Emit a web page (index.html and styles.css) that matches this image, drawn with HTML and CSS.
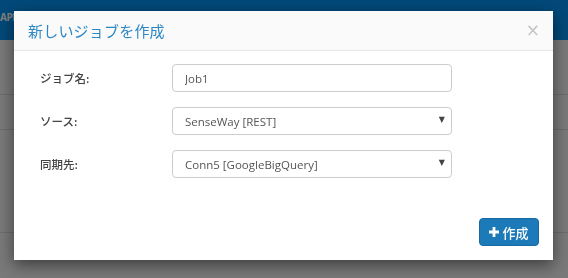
FILE: index.html
```html
<!DOCTYPE html>
<html lang="ja">
<head>
    <meta charset="UTF-8">
    <meta name="viewport" content="width=device-width, initial-scale=1.0">
    <title>新しいジョブを作成</title>
    <link rel="stylesheet" href="styles.css">
</head>
<body>
    <div class="page">
        <div class="navbar"><span class="brand">APP</span></div>
        <div class="page-row first"></div>
        <div class="page-row"></div>
        <div class="page-row tall"></div>
    </div>

    <div class="backdrop"></div>

    <div class="modal">
        <div class="modal-header">
            <h4 class="modal-title">新しいジョブを作成</h4>
            <span class="close">&times;</span>
        </div>
        <form class="modal-body">
            <div class="form-row">
                <label>ジョブ名:</label>
                <input type="text" value="Job1">
            </div>
            <div class="form-row">
                <label>ソース:</label>
                <div class="select-wrap">
                    <select>
                        <option>SenseWay [REST]</option>
                    </select>
                    <span class="caret">&#9660;</span>
                </div>
            </div>
            <div class="form-row">
                <label>同期先:</label>
                <div class="select-wrap">
                    <select>
                        <option>Conn5 [GoogleBigQuery]</option>
                    </select>
                    <span class="caret">&#9660;</span>
                </div>
            </div>
        </form>
        <div class="modal-footer">
            <button type="button" class="btn-primary">
                <svg class="plus" width="10" height="10" viewBox="0 0 10 10">
                    <path d="M3.6 0h2.8v3.6H10v2.8H6.4V10H3.6V6.4H0V3.6h3.6z" fill="#fff"/>
                </svg>
                作成
            </button>
        </div>
    </div>
</body>
</html>
```

FILE: styles.css
```css
* {
    margin: 0;
    padding: 0;
    box-sizing: border-box;
}

body {
    width: 568px;
    height: 278px;
    overflow: hidden;
    background-color: #f2f2f2;
    font-family: 'Open Sans', 'Noto Sans CJK JP', sans-serif;
    font-size: 12px;
    color: #333;
}

.navbar {
    height: 40px;
    background-color: #0492f2;
    padding: 8px 0 0 0;
}

.brand {
    color: #ffffff;
    font-weight: bold;
    font-size: 10px;
    letter-spacing: -0.5px;
}

.page-row {
    height: 35px;
    border-bottom: 1px solid #d8d8d8;
}

.page-row.first {
    height: 55px;
}

.page-row.tall {
    height: 103px;
}

.backdrop {
    position: fixed;
    top: 0;
    left: 0;
    right: 0;
    bottom: 0;
    background-color: rgba(0, 0, 0, 0.5);
}

.modal {
    position: fixed;
    top: 11px;
    left: 14px;
    width: 539px;
    background-color: #fff;
    box-shadow: 0 5px 15px rgba(0, 0, 0, 0.5);
}

.modal-header {
    height: 40px;
    display: flex;
    align-items: center;
    justify-content: space-between;
    padding: 0 14px;
    background-color: #fafafa;
    border-bottom: 1px solid #e5e5e5;
}

.modal-title {
    font-family: 'Noto Sans CJK JP', sans-serif;
    font-weight: normal;
    font-size: 15px;
    color: #2c87c5;
    letter-spacing: 0.2px;
}

.close {
    font-family: 'DejaVu Sans', sans-serif;
    font-size: 17px;
    color: #c4c4c4;
    margin-right: -1px;
    margin-top: -2px;
}

.modal-body {
    display: flex;
    flex-direction: column;
    gap: 15px;
    padding: 13px 0 0 26px;
}

.form-row {
    display: flex;
    align-items: center;
    height: 28px;
}

.form-row label {
    width: 132px;
    font-family: 'Noto Sans CJK JP', sans-serif;
    font-weight: 500;
    font-size: 11.5px;
    color: #444;
}

input, select {
    width: 280px;
    height: 28px;
    border: 1px solid #ccc;
    border-radius: 4px;
    padding: 0 12px;
    font-family: 'Open Sans', 'Noto Sans CJK JP', sans-serif;
    font-size: 11.5px;
    color: #555;
    background-color: #fff;
    outline: none;
}

select {
    appearance: none;
    -webkit-appearance: none;
}

.select-wrap {
    position: relative;
}

.caret {
    position: absolute;
    right: 7px;
    top: 8px;
    font-family: 'DejaVu Sans', sans-serif;
    font-size: 8px;
    color: #444;
    pointer-events: none;
}

.modal-footer {
    display: flex;
    justify-content: flex-end;
    padding: 40px 14px 14px 0;
}

.btn-primary {
    display: flex;
    align-items: center;
    gap: 3px;
    height: 28px;
    width: 60px;
    justify-content: center;
    background-color: #1c7ab9;
    border: 1px solid #186aa3;
    border-radius: 4px;
    color: #fff;
    font-family: 'Noto Sans CJK JP', sans-serif;
    font-size: 13px;
    font-weight: 500;
}
```
